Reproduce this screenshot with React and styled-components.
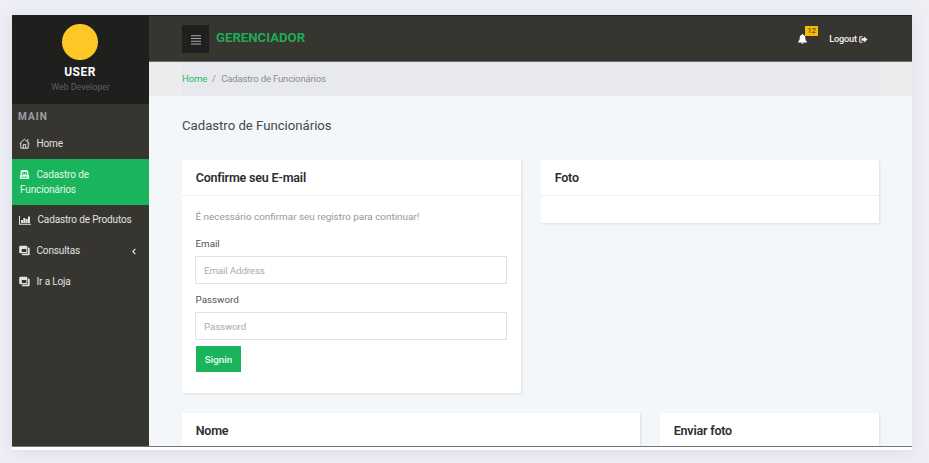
import React from "react";
import styled, { createGlobalStyle } from "styled-components";

const GlobalStyle = createGlobalStyle`
  *, *::before, *::after { box-sizing: border-box; }
  html, body { height: 100%; margin: 0; }
  body {
    background: #eeeff5;
    font-family: Roboto, "Liberation Sans", sans-serif;
    overflow: hidden;
  }
`;

const Page = styled.div`
  height: 463px;
  padding: 15px 17px 13px 12px;
`;

const Frame = styled.div`
  height: 435px;
  background: #fff;
  padding-bottom: 3px;
  box-shadow: 0 2px 14px rgba(90, 95, 140, 0.13);
`;

const Shell = styled.div`
  display: flex;
  height: 432px;
  overflow: hidden;
  border-top: 1px solid #1c2424;
  border-bottom: 1px solid #77787a;
`;

const Sidebar = styled.aside`
  width: 137px;
  flex: none;
  background: #373530;
  color: #e6e6e4;
`;

const Profile = styled.div`
  height: 88px;
  background: #1f1f1e;
  display: flex;
  flex-direction: column;
  align-items: center;
  padding-top: 8px;
`;

const Avatar = styled.div`
  width: 36px;
  height: 36px;
  margin-right: 1px;
  border-radius: 50%;
  background: #fdc826;
`;

const UserName = styled.div`
  margin: 5px 1px 0 0;
  font-size: 12px;
  line-height: 15px;
  font-weight: 700;
  letter-spacing: 0.5px;
  color: #fff;
`;

const UserRole = styled.div`
  font-size: 9px;
  line-height: 14px;
  letter-spacing: -0.1px;
  color: #5e5e5d;
`;

const MenuHeading = styled.div`
  padding: 5px 0 0 6px;
  height: 24px;
  font-size: 10px;
  line-height: 15px;
  font-weight: 700;
  letter-spacing: 1.05px;
  color: #9da0a5;
`;

const MenuItem = styled.a`
  display: block;
  position: relative;
  height: ${(p) => (p.$tall ? 46 : 31)}px;
  padding: ${(p) => p.$top || 8}px 7px 0;
  font-size: 10px;
  letter-spacing: -0.14px;
  line-height: 14.5px;
  color: ${(p) => (p.$active ? "#e4f8ea" : "#e2e2e0")};
  background: ${(p) => (p.$active ? "#1ab45c" : "transparent")};
  white-space: ${(p) => (p.$tall ? "normal" : "nowrap")};

  svg {
    vertical-align: -2px;
    margin-right: 6.5px;
  }
`;

const SecondLine = styled.span`
  display: block;
  padding-left: 1px;
`;

const Caret = styled.span`
  position: absolute;
  right: 13px;
  top: 8px;

  && svg { margin: 0; vertical-align: -1px; }
`;

const Main = styled.div`
  flex: 1;
  min-width: 0;
  background: #f3f7fa;
`;

const Header = styled.header`
  height: 46px;
  display: flex;
  align-items: center;
  padding: 0 44px 0 33px;
  background: #373530;
  border-bottom: 1px solid #6d6970;
`;

const MenuButton = styled.button`
  width: 27px;
  height: 28px;
  padding: 2px 0 0;
  border: 0;
  background: #1f1f1e;
  display: flex;
  align-items: center;
  justify-content: center;
`;

const Brand = styled.div`
  margin: -2px auto 0 7px;
  font-size: 13.2px;
  font-weight: 700;
  line-height: 18px;
  color: #1dab58;
`;

const Alerts = styled.div`
  position: relative;
  width: 20px;
  height: 28px;
  padding-top: 18px;
  margin-top: -17px;
  display: flex;
`;

const Count = styled.span`
  position: absolute;
  left: 7px;
  top: 10px;
  width: 13px;
  height: 10px;
  background: #f5b90c;
  color: #3d3518;
  font-size: 8px;
  line-height: 10px;
  text-align: center;
`;

const Logout = styled.a`
  display: flex;
  align-items: center;
  gap: 2px;
  margin: 1px 0 0 11px;
  font-size: 9.2px;
  line-height: 14px;
  font-weight: 500;
  letter-spacing: -0.15px;
  color: #f2f2f1;
`;

const Crumbs = styled.nav`
  height: 34px;
  padding: 0 33px;
  background: #ececed;
`;

const CrumbBar = styled.div`
  height: 34px;
  display: flex;
  background: #e7e9ee;
  font-size: 9.6px;
  letter-spacing: -0.2px;
  line-height: 34px;
  color: #8c8e92;
`;

const CrumbLink = styled.a`
  color: #2dba68;
`;

const Slash = styled.span`
  padding: 0 5.5px 0 5px;
`;

const Content = styled.main`
  padding: 0 33px;
`;

const Title = styled.h1`
  margin: 0;
  padding-top: 20px;
  height: 64px;
  font-size: 13.2px;
  line-height: 20px;
  font-weight: 400;
  letter-spacing: -0.02px;
  color: #46494d;
`;

const Row = styled.div`
  display: grid;
  grid-template-columns: ${(p) => p.$columns};
  column-gap: 20px;
  align-items: start;
  margin-bottom: 20px;
`;

const Card = styled.section`
  height: ${(p) => p.$height}px;
  background: #fff;
  box-shadow: 1px 1px 2px rgba(0, 0, 0, 0.1);
`;

const CardTitle = styled.h2`
  margin: 0;
  height: 36px;
  padding: 0 13.7px;
  border-bottom: 1px solid #eeeff0;
  font-size: 12.5px;
  line-height: 36px;
  font-weight: 600;
  letter-spacing: -0.2px;
  color: #2b2e32;
`;

const Form = styled.form`
  padding: 14px 14px 0 13px;
`;

const Hint = styled.p`
  margin: 0 0 13px;
  padding-left: 0.5px;
  font-size: 9.9px;
  line-height: 14px;
  color: #96989a;
`;

const Label = styled.label`
  display: block;
  padding-left: 0.5px;
  font-size: 9.8px;
  line-height: 14px;
  color: #505459;
`;

const Input = styled.input`
  display: block;
  width: 312px;
  height: 28px;
  margin: 5px 0 9px;
  padding: 0 8px;
  border: 1px solid #dee1e5;
  border-radius: 0;
  font: 9.8px Roboto, sans-serif;
  letter-spacing: -0.15px;
  outline: none;

  &::placeholder { color: #a9abad; opacity: 1; }
`;

const Submit = styled.button`
  display: block;
  width: 45px;
  height: 26px;
  margin: -3px 0 0 1px;
  padding: 0;
  border: 0;
  background: #1ab45c;
  color: #eefaf2;
  font: 500 9.8px Roboto, sans-serif;
`;

const HomeIcon = () => (
  <svg width="11" height="11" viewBox="0 0 11 11" fill="none" stroke="currentColor">
    <path d="M.6 5.7 5.5 1.2l4.9 4.5M1.8 5v5.2h7.4V5M4.3 10V6.6h2.4V10" />
    <path d="M8.8 1.2v2.5" />
  </svg>
);

const BadgeIcon = () => (
  <svg width="11" height="11" viewBox="0 0 11 11" fill="currentColor" fillRule="evenodd">
    <path d="M1.6 2.2 3 .9h5l1.4 1.300v3.900h.7V10H.9V6.100h.7zM3 3v3h5V3zM2.400 7.800v.8h6.200v-.8z" />
    <path d="M3.600 3.400h1.400v1.100H3.600zM6 3.400h1.400v1.100H6zM3.800 5.200h3.500V6H3.800z" />
  </svg>
);

const ChartIcon = () => (
  <svg width="12" height="10" viewBox="0 0 12 10" fill="currentColor">
    <path d="M0 1h1v7.7h11v1H0zM2 5h2v3H2zM4.300 3h2v5h-2zM6.700 4h2v4h-2zM9 1.500h2V8H9z" />
  </svg>
);

const LayersIcon = () => (
  <svg width="11" height="11" viewBox="0 0 11 11" fill="currentColor" fillRule="evenodd">
    <path d="M1.400.8h5.800q1.200 0 1.200 1.200v5q0 1.200-1.200 1.200H1.400Q.2 8.200.2 7V2Q.2.8 1.400.8zM2.800 3.900v3.200h4.500V3.900z" />
    <path d="M9 2.600h.5q1.200 0 1.200 1.200v5.300q0 1.200-1.200 1.200H4q-1.200 0-1.200-1.200v-.3h5q1.200 0 1.200-1.200z" />
  </svg>
);

const CaretIcon = () => (
  <svg width="4" height="7" viewBox="0 0 4 7" fill="none" stroke="currentColor" strokeWidth="1.2">
    <path d="M3.300.8.9 3.500l2.400 2.700" />
  </svg>
);

const BarsIcon = () => (
  <svg width="10" height="10" viewBox="0 0 10 10" fill="#aaaaa9">
    <path d="M0 .2h10v1H0zM0 3.100h10v1H0zM0 5.700h10v1H0zM0 8.600h10v1H0z" />
  </svg>
);

const BellIcon = () => (
  <svg width="9" height="10" viewBox="0 0 9 10" fill="#fff">
    <path d="M4.500 0c.5 0 .7.3.7.8C6.800 1.200 7.300 2.500 7.300 4c0 2 .6 2.900 1.600 3.800v.7H.1v-.7C1.100 6.900 1.700 6 1.700 4c0-1.500.6-2.800 2.100-3.200 0-.5.2-.8.700-.8zM3.400 8.700h2.200c0 .7-.5 1.100-1.100 1.100s-1.100-.4-1.100-1.100z" />
  </svg>
);

const LogoutIcon = () => (
  <svg width="9" height="7" viewBox="0 0 9 7" fill="currentColor">
    <path d="M3.500.2H1.500Q.2.200.2 1.500v4q0 1.300 1.300 1.300h2v-1H1.300V1.200h2.200zM2.500 2.300h2.400V.4L8.600 3.500 4.900 6.600V4.700H2.500z" />
  </svg>
);

export default function App() {
  return (
    <Page>
      <GlobalStyle />
      <Frame>
        <Shell>
          <Sidebar>
            <Profile>
              <Avatar />
              <UserName>USER</UserName>
              <UserRole>Web Developer</UserRole>
            </Profile>
            <MenuHeading>MAIN</MenuHeading>
            <MenuItem $top={9}><HomeIcon />Home</MenuItem>
            <MenuItem $active $tall $top={9}>
              <BadgeIcon />Cadastro de <SecondLine>Funcionários</SecondLine>
            </MenuItem>
            <MenuItem><ChartIcon />Cadastro de Produtos</MenuItem>
            <MenuItem><LayersIcon />Consultas<Caret><CaretIcon /></Caret></MenuItem>
            <MenuItem><LayersIcon />Ir a Loja</MenuItem>
          </Sidebar>
          <Main>
            <Header>
              <MenuButton aria-label="Menu"><BarsIcon /></MenuButton>
              <Brand>GERENCIADOR</Brand>
              <Alerts><BellIcon /><Count>12</Count></Alerts>
              <Logout>Logout<LogoutIcon /></Logout>
            </Header>
            <Crumbs>
              <CrumbBar>
                <CrumbLink>Home</CrumbLink>
                <Slash>/</Slash>
                <span>Cadastro de Funcionários</span>
              </CrumbBar>
            </Crumbs>
            <Content>
              <Title>Cadastro de Funcionários</Title>
              <Row $columns="339px 338px">
                <Card $height={233}>
                  <CardTitle>Confirme seu E-mail</CardTitle>
                  <Form>
                    <Hint>É necessário confirmar seu registro para continuar!</Hint>
                    <Label htmlFor="email">Email</Label>
                    <Input id="email" placeholder="Email Address" />
                    <Label htmlFor="password">Password</Label>
                    <Input id="password" type="password" placeholder="Password" />
                    <Submit type="button">Signin</Submit>
                  </Form>
                </Card>
                <Card $height={63}>
                  <CardTitle>Foto</CardTitle>
                </Card>
              </Row>
              <Row $columns="458px 219px">
                <Card $height={63}><CardTitle>Nome</CardTitle></Card>
                <Card $height={63}><CardTitle>Enviar foto</CardTitle></Card>
              </Row>
            </Content>
          </Main>
        </Shell>
      </Frame>
    </Page>
  );
}
